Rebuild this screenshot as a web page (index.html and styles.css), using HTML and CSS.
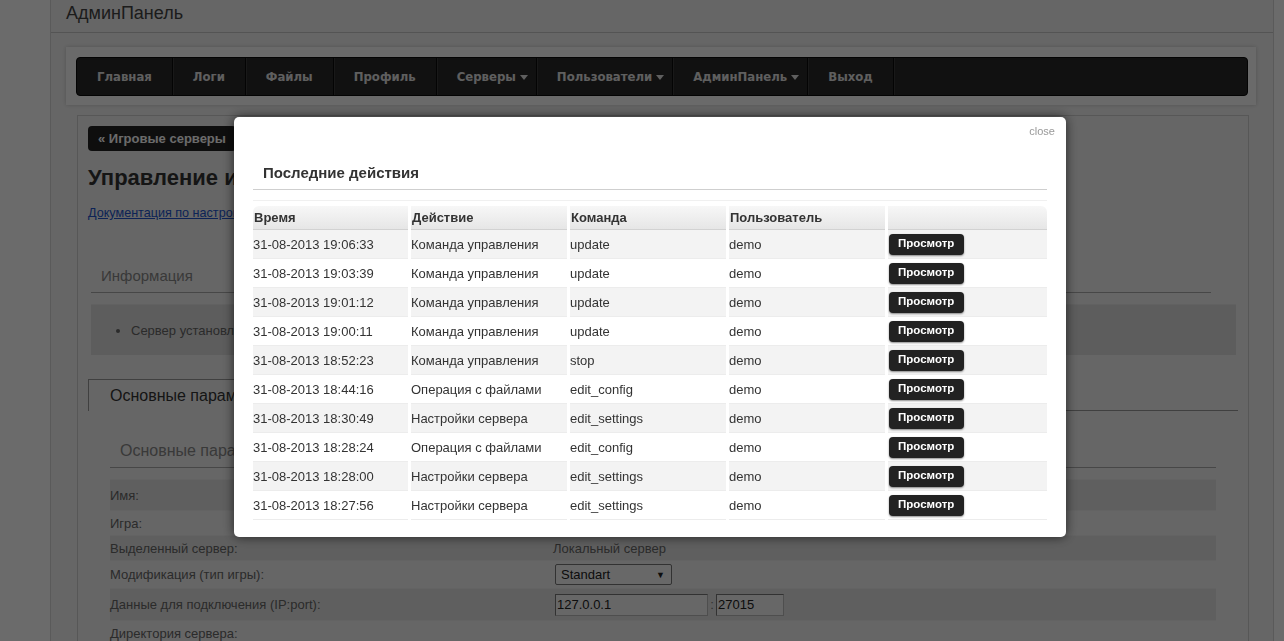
FILE: index.html
```html
<!DOCTYPE html>
<html lang="ru">
<head>
<meta charset="utf-8">
<title>АдминПанель</title>
<link rel="stylesheet" href="styles.css">
</head>
<body>
<div class="page">
  <header class="site-header"><h1 class="site-title">АдминПанель</h1></header>
  <div class="nav-wrap">
    <nav class="navbar">
      <a class="nav-item" href="#">Главная</a>
      <a class="nav-item" href="#">Логи</a>
      <a class="nav-item" href="#">Файлы</a>
      <a class="nav-item" href="#">Профиль</a>
      <a class="nav-item nav-dropdown" href="#">Серверы<span class="caret"></span></a>
      <a class="nav-item nav-dropdown" href="#">Пользователи<span class="caret"></span></a>
      <a class="nav-item nav-dropdown" href="#">АдминПанель<span class="caret"></span></a>
      <a class="nav-item" href="#">Выход</a>
    </nav>
  </div>
  <div class="panel">
    <a class="back-btn" href="#">« Игровые серверы</a>
    <h2 class="panel-title">Управление игровым сервером</h2>
    <a class="doc-link" href="#">Документация по настройке игровых серверов</a>
    <div class="tabs tabs-info">
      <ul class="tab-list"><li class="tab">Информация</li></ul>
      <div class="info-box"><ul class="info-list"><li>Сервер установлен и готов к работе</li></ul></div>
    </div>
    <div class="tabs tabs-main">
      <ul class="tab-list tab-list-main"><li class="tab tab-active">Основные параметры</li></ul>
      <div class="tab-body">
        <ul class="tab-list tab-list-sub"><li class="tab tab-sub">Основные параметры</li></ul>
        <div class="form-rows">
          <div class="form-row shade row-name"><span class="label">Имя:</span><span class="value">Counter-Strike Server</span></div>
          <div class="form-row row-text"><span class="label">Игра:</span><span class="value">Counter-Strike 1.6</span></div>
          <div class="form-row shade row-text"><span class="label">Выделенный сервер:</span><span class="value">Локальный сервер</span></div>
          <div class="form-row row-select"><span class="label">Модификация (тип игры):</span><span class="value"><span class="select">Standart<span class="select-arrow">▼</span></span></span></div>
          <div class="form-row shade row-ip"><span class="label">Данные для подключения (IP:port):</span><span class="value"><span class="input input-ip">127.0.0.1</span><span class="colon">:</span><span class="input input-port">27015</span></span></div>
          <div class="form-row row-text"><span class="label">Директория сервера:</span><span class="value"></span></div>
        </div>
      </div>
    </div>
  </div>
</div>
<div class="overlay"></div>
<div class="modal">
  <a class="modal-close" href="#">close</a>
  <h3 class="modal-title">Последние действия</h3>
  <div class="modal-sep"></div>
  <table class="log-table">
    <colgroup>
      <col class="col-time"><col class="col-action"><col class="col-cmd"><col class="col-user"><col>
    </colgroup>
    <thead>
      <tr><th>Время</th><th>Действие</th><th>Команда</th><th>Пользователь</th><th></th></tr>
    </thead>
    <tbody>
      <tr><td>31-08-2013 19:06:33</td><td>Команда управления</td><td>update</td><td>demo</td><td><a class="view-btn" href="#">Просмотр</a></td></tr>
      <tr><td>31-08-2013 19:03:39</td><td>Команда управления</td><td>update</td><td>demo</td><td><a class="view-btn" href="#">Просмотр</a></td></tr>
      <tr><td>31-08-2013 19:01:12</td><td>Команда управления</td><td>update</td><td>demo</td><td><a class="view-btn" href="#">Просмотр</a></td></tr>
      <tr><td>31-08-2013 19:00:11</td><td>Команда управления</td><td>update</td><td>demo</td><td><a class="view-btn" href="#">Просмотр</a></td></tr>
      <tr><td>31-08-2013 18:52:23</td><td>Команда управления</td><td>stop</td><td>demo</td><td><a class="view-btn" href="#">Просмотр</a></td></tr>
      <tr><td>31-08-2013 18:44:16</td><td>Операция с файлами</td><td>edit_config</td><td>demo</td><td><a class="view-btn" href="#">Просмотр</a></td></tr>
      <tr><td>31-08-2013 18:30:49</td><td>Настройки сервера</td><td>edit_settings</td><td>demo</td><td><a class="view-btn" href="#">Просмотр</a></td></tr>
      <tr><td>31-08-2013 18:28:24</td><td>Операция с файлами</td><td>edit_config</td><td>demo</td><td><a class="view-btn" href="#">Просмотр</a></td></tr>
      <tr><td>31-08-2013 18:28:00</td><td>Настройки сервера</td><td>edit_settings</td><td>demo</td><td><a class="view-btn" href="#">Просмотр</a></td></tr>
      <tr><td>31-08-2013 18:27:56</td><td>Настройки сервера</td><td>edit_settings</td><td>demo</td><td><a class="view-btn" href="#">Просмотр</a></td></tr>
    </tbody>
  </table>
</div>
</body>
</html>
```

FILE: styles.css
```css
* { box-sizing: border-box; }
html, body { margin: 0; height: 100%; overflow: hidden; }
body {
  background: #fff;
  font-family: "Liberation Sans", Arial, sans-serif;
  font-size: 13px;
  color: #333;
}

.page {
  margin-left: 50px;
  width: 1224px;
  height: 100%;
  background: #f3f3f3;
  border-left: 1px solid #d6d6d6;
  border-right: 1px solid #d6d6d6;
}

.site-header {
  height: 33px;
  border-bottom: 1px solid #c8c8c8;
  padding-left: 15px;
}
.site-title {
  margin: 0;
  font-size: 18px;
  font-weight: normal;
  line-height: 26px;
  color: #444;
}

.nav-wrap {
  margin: 14px 17px 0 15px;
  padding: 10px 8px 9px 10px;
  background: #fdfdfd;
  box-shadow: 0 0 4px rgba(0,0,0,.18);
}
.navbar {
  display: flex;
  height: 39px;
  background: #2a2a2a;
  border: 1px solid #0a0a0a;
  border-radius: 4px;
}
.nav-item {
  display: flex;
  align-items: center;
  padding: 0 20px 0 20px;
  border-right: 1px solid #0a0a0a;
  box-shadow: 1px 0 0 #3c3c3c;
  font-family: "DejaVu Sans Condensed", "DejaVu Sans", sans-serif;
  font-stretch: condensed;
  font-weight: bold;
  font-size: 13px;
  color: #e2e2e2;
  text-decoration: none;
}
.nav-dropdown { padding-right: 8px; }
.caret {
  width: 0;
  height: 0;
  border-top: 5px solid #e2e2e2;
  border-left: 4.5px solid transparent;
  border-right: 4.5px solid transparent;
  margin-left: 4px;
  margin-top: 2px;
}

.panel {
  margin: 10px 24px 0 26px;
  height: 600px;
  border: 1px solid #cfcfcf;
  padding: 10px;
}
.back-btn {
  display: inline-block;
  height: 25px;
  line-height: 25px;
  padding: 0 10px;
  background: #222;
  color: #fff;
  font-weight: bold;
  font-size: 13px;
  border-radius: 4px;
  text-decoration: none;
}
.panel-title {
  margin: 14px 0 0;
  font-size: 22px;
  line-height: 26px;
  color: #333;
}
.doc-link {
  display: inline-block;
  margin-top: 14px;
  font-size: 12.6px;
  line-height: 16px;
  color: #2255cc;
}

.tabs-info { margin: 37px 2px 0 3px; }
.tab-list {
  list-style: none;
  margin: 0;
  padding: 0;
  display: flex;
  border-bottom: 1px solid #aaa;
}
.tabs-info .tab-list { margin-right: 25px; }
.tab {
  padding: 8px 10px 6px;
  font-size: 15px;
  line-height: 20px;
  color: #888;
}
.info-box {
  margin-top: 11px;
  border-top: 1px solid #e6e6e6;
  background: #dedede;
  height: 51px;
  padding-top: 17px;
}
.info-list {
  margin: 0;
  padding-left: 40px;
  color: #666;
  font-size: 13px;
  line-height: 18px;
}

.tabs-main { margin: 24px 0 0; }
.tab-list-main { border-bottom-color: #999; }
.tab-active {
  padding: 6px 21px 5px;
  border: 1px solid #999;
  border-bottom: none;
  margin-bottom: -1px;
  background: #f3f3f3;
  font-size: 16px;
  color: #333;
}
.tab-body { padding: 25px 22px 0 22px; }
.tab-list-sub { border-bottom-color: #aaa; }
.tab-sub { padding: 5px 10px 6px; font-size: 16px; }

.form-rows { margin-top: 11px; }
.form-row {
  display: flex;
  align-items: center;
  border-top: 1px solid #ececec;
  color: #666;
  font-size: 13px;
}
.form-row.shade { background: #e3e3e3; }
.row-name { height: 31px; }
.row-text { height: 25px; }
.row-select { height: 28px; }
.row-ip { height: 32px; }
.label { width: 443px; }
.value { display: flex; align-items: center; }
.select {
  display: inline-flex;
  align-items: center;
  justify-content: space-between;
  width: 117px;
  height: 21px;
  margin-left: 2px;
  padding: 0 6px 0 5px;
  background: #f8f8f8;
  border: 1px solid #777;
  border-radius: 2px;
  color: #222;
  font-size: 13px;
}
.select-arrow { font-size: 9px; }
.input {
  display: inline-block;
  height: 22px;
  line-height: 20px;
  padding-left: 1px;
  background: #f6f6f6;
  border: 1px solid #bbb;
  border-top-color: #777;
  border-left-color: #777;
  color: #222;
  font-size: 13px;
}
.input-ip { width: 153px; margin-left: 2px; }
.colon { width: 8px; text-align: center; color: #777; }
.input-port { width: 68px; }

.overlay {
  position: fixed;
  inset: 0;
  background: rgba(0,0,0,.58);
}

.modal {
  position: fixed;
  left: 234px;
  top: 117px;
  width: 832px;
  height: 420px;
  padding: 0 19px;
  background: #fff;
  border-radius: 5px;
  box-shadow: 0 0 12px rgba(0,0,0,.65);
}
.modal-close {
  position: absolute;
  top: 7px;
  right: 11px;
  font-size: 11px;
  line-height: 14px;
  color: #999;
  text-decoration: none;
}
.modal-title {
  margin: 0;
  padding: 47px 0 7px 10px;
  border-bottom: 1px solid #cfcfcf;
  font-size: 15px;
  line-height: 18px;
  color: #333;
}
.modal-sep {
  margin-top: 10px;
  border-top: 1px solid #f0f0f0;
}
.log-table {
  width: calc(100% + 6px);
  margin: 5px -3px 0;
  border-collapse: separate;
  border-spacing: 3px 0;
  table-layout: fixed;
  font-size: 13px;
  color: #333;
}
.col-time { width: 155px; }
.col-action, .col-cmd, .col-user { width: 156px; }
.log-table th {
  height: 24px;
  padding: 0 1px;
  text-align: left;
  font-weight: bold;
  background: linear-gradient(#f7f7f7, #e6e6e6);
  border-bottom: 1px solid #d2d2d2;
}
.log-table th:first-child { border-top-left-radius: 6px; }
.log-table th:last-child { border-top-right-radius: 6px; }
.log-table td {
  height: 29px;
  padding: 0;
  border-bottom: 1px solid #ececec;
  white-space: nowrap;
}
.log-table tbody tr:nth-child(odd) td { background: #f3f3f3; }
.view-btn {
  display: inline-block;
  margin-left: 1px;
  width: 75px;
  height: 21px;
  line-height: 19px;
  padding-left: 9px;
  background: #222;
  color: #fff;
  font-weight: bold;
  font-size: 11.5px;
  border-radius: 4px;
  box-shadow: 0 1px 2px rgba(0,0,0,.45);
  text-decoration: none;
  vertical-align: middle;
}
```
